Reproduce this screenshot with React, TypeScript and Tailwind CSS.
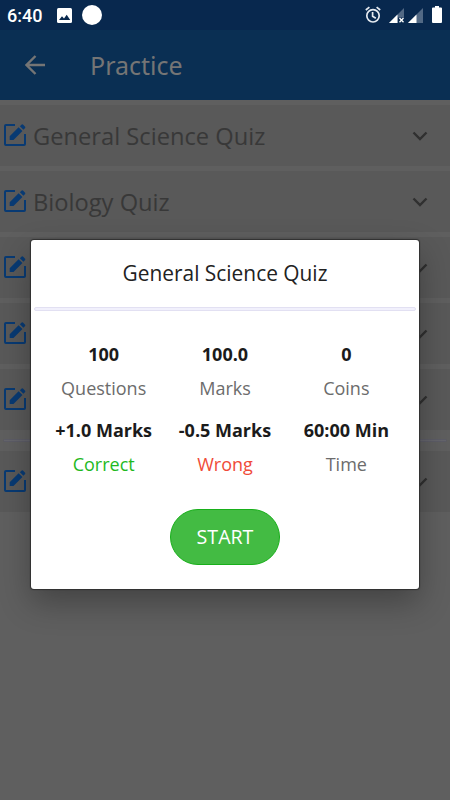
import React from "react";

const sans = "font-['Open_Sans','Noto_Sans',sans-serif]";

function EditIcon() {
  return (
    <svg width="24" height="24" viewBox="0 0 24 24" className="mb-[2px] block shrink-0">
      <path d="M12 2H3Q2 2 2 3V21Q2 22 3 22H21Q22 22 22 21V11" fill="none" stroke="#083a73" strokeWidth="2" />
      <path d="M6.7 13.2L15.6 4.3L19.4 8.1L10.5 17H6.7Z M16.9 3.2L18.7 1.5Q19.3 1 19.9 1.5L22.1 3.7Q22.6 4.3 22.1 4.9L20.4 6.7Z" fill="#083a73" />
    </svg>
  );
}

function QuizRow({ name }: { name?: string }) {
  return (
    <div className="flex h-[61px] items-center bg-[#595959] pl-[3px] pr-[22px]">
      <EditIcon />
      {name && <span className="ml-[6px] whitespace-nowrap text-[23.7px] leading-[32px] text-[#383838]">{name}</span>}
      <svg width="16" height="10" viewBox="0 0 16 10" className="ml-auto block shrink-0">
        <path d="M1.5 1.5L8 8L14.5 1.5" fill="none" stroke="#303030" strokeWidth="2.4" />
      </svg>
    </div>
  );
}

function Stat({ value, label, tone }: { value: string; label: string; tone: string }) {
  return (
    <div className="flex h-[76px] flex-col items-center whitespace-nowrap text-[18px]">
      <div className="h-[34px] font-bold leading-[24px] text-[#1b1b1b]">{value}</div>
      <div className={`leading-[24px] ${tone}`}>{label}</div>
    </div>
  );
}

export default function App() {
  return (
    <div className={`relative h-[800px] w-[450px] overflow-hidden bg-[#5f5f5f] ${sans}`}>
      <div className="flex h-[30px] items-center bg-[#08284e] pl-[7px] font-[Roboto,sans-serif] text-white">
        <span className="mt-[2px] w-[50px] text-[18px] font-medium leading-[28px]">6:40</span>
        <svg width="15" height="15" viewBox="0 0 15 15" className="block">
          <rect width="15" height="15" rx="1.5" fill="white" />
          <path d="M2 12L5 8.2L7 10.5L9.7 6.8L13.2 12Z" fill="#08284e" />
        </svg>
        <span className="ml-[10px] size-[20px] rounded-full bg-white" />
        <svg width="80" height="20" viewBox="365 5 80 20" className="ml-auto mr-[5px] block">
          <g fill="none" stroke="#e5eaf0" strokeWidth="1.7">
            <circle cx="373" cy="15.8" r="6.2" />
            <path d="M372.6 12V16.2L375.8 18.2M365.8 10L369.4 7.2M380.2 10L376.6 7.2" />
          </g>
          <path d="M404 8V17.5H397.5V23H389Z" fill="#526985" />
          <path d="M397.5 14.5V23H389Z" fill="white" />
          <path d="M399.5 18L403.5 22.2M403.5 18L399.5 22.2" stroke="white" strokeWidth="1.3" />
          <path d="M423 8V23H408Z" fill="#526985" />
          <path d="M416.5 14.5V23H408Z" fill="white" />
          <path d="M435 6H439V7.5H441Q442 7.5 442 8.5V22Q442 23 441 23H433Q432 23 432 22V8.5Q432 7.5 433 7.5H435Z" fill="white" />
        </svg>
      </div>
      <header className="flex h-[70px] items-center bg-[#0a2f53] pl-[25px] text-[#757575]">
        <svg width="20" height="20" viewBox="0 0 20 20" className="block">
          <path d="M20 10H2M10.5 1L1.5 10L10.5 19" fill="none" stroke="currentColor" strokeWidth="2.4" />
        </svg>
        <h1 className="mb-[1px] ml-[45px] font-['Noto_Sans',sans-serif] text-[25px] leading-[34px]">Practice</h1>
      </header>
      <main className="flex flex-col gap-[5px] pt-[5px]">
        <QuizRow name="General Science Quiz" />
        <QuizRow name="Biology Quiz" />
        <QuizRow />
        <QuizRow />
        <QuizRow />
        <div className="mx-[3px] my-[4px] h-[3px] rounded border border-[#5c5c66] bg-[#65656c]" />
        <QuizRow />
      </main>

      <section className="absolute left-[31px] top-[240px] flex h-[349px] w-[388px] flex-col rounded-[3px] bg-white px-[3px] shadow-[0_0_1px_1px_#303030,0_13px_32px_0px_rgba(0,0,0,.3)]">
        <h2 className="mt-[17px] h-[50px] text-center text-[20.9px] leading-[32px] text-[#222]">General Science Quiz</h2>
        <div className="h-[4px] w-full rounded-full border border-[#e2e0f2] bg-[#f1f0fc]" />
        <div className="grid h-[187px] grid-cols-3 content-start px-[9px] pt-[31px]">
          <Stat value="100" label="Questions" tone="text-[#6c6c6c]" />
          <Stat value="100.0" label="Marks" tone="text-[#6c6c6c]" />
          <Stat value="0" label="Coins" tone="text-[#6c6c6c]" />
          <Stat value="+1.0 Marks" label="Correct" tone="text-[#1eb91e]" />
          <Stat value="-0.5 Marks" label="Wrong" tone="text-[#f04b38]" />
          <Stat value="60:00 Min" label="Time" tone="text-[#6c6c6c]" />
        </div>
        <button className="mt-[11px] h-[56px] w-[110px] self-center rounded-full border border-[#18af1a] bg-[#43bb43] text-[19.6px] text-white">START</button>
      </section>
    </div>
  );
}
